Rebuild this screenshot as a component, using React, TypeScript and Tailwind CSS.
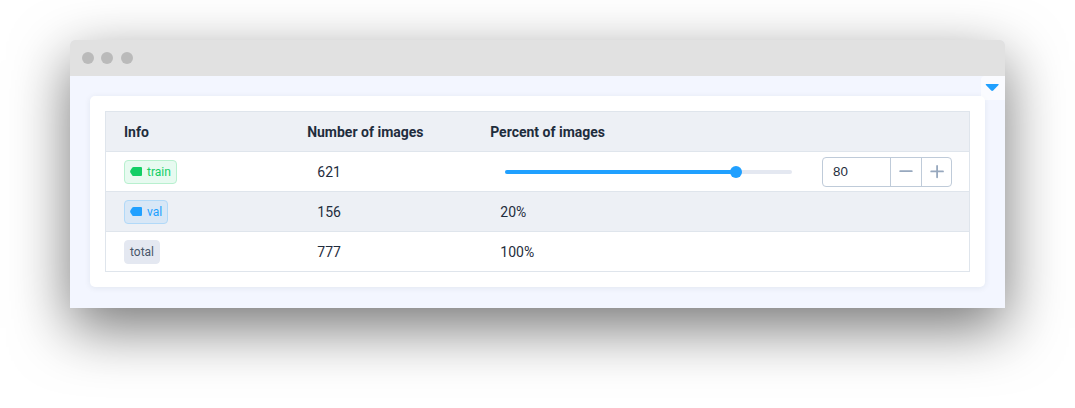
import type { ReactNode } from "react";

const COLS = "grid grid-cols-[183px_183px_1fr] items-center pl-[18px]";

function LabelIcon() {
  return (
    <svg width="12" height="9" viewBox="0 0 12 9" className="mr-[5px] shrink-0" fill="currentColor">
      <path d="M3.6 0H11Q12 0 12 1V8Q12 9 11 9H3.6Q2.8 9 2.3 8.4L.4 5.4Q-.1 4.5.4 3.6L2.3.6Q2.8 0 3.6 0Z" />
    </svg>
  );
}

function Tag({ tone, children }: { tone: string; children: ReactNode }) {
  return (
    <span className={`inline-flex h-6 items-center rounded-[4px] border px-[5px] text-[12px] leading-none ${tone}`}>
      {children}
    </span>
  );
}

function Row({ tag, count, shaded, children }: { tag: ReactNode; count: number; shaded?: boolean; children: ReactNode }) {
  return (
    <div className={`${COLS} h-10 border-b border-[#dfe5ec] ${shaded ? "bg-[#edf0f5]" : "bg-white"}`}>
      <div className="flex">{tag}</div>
      <div className="pl-[10.3px]">{count}</div>
      <div className="pl-[10.3px]">{children}</div>
    </div>
  );
}

function Slider() {
  return (
    <div className="ml-[4.7px] flex h-3 w-[287px] items-center">
      <div className="flex h-1 w-full items-center rounded-full bg-[#e4e8f1]">
        <div className="h-1 w-[231px] rounded-full bg-[#20a0ff]" />
        <div className="-ml-[6px] size-3 rounded-full bg-[#20a0ff]" />
      </div>
    </div>
  );
}

function NumberInput() {
  return (
    <div className="ml-[30px] flex h-[30px] w-[130px] rounded-[4px] border border-[#bfcbd9] bg-white text-[#97a8be]">
      <div className="flex w-[67px] items-center pl-[10px] font-['Liberation_Sans',sans-serif] text-[13.33px] text-[#1f2d3d]">80</div>
      <div className="flex w-[31px] items-center justify-center border-l border-[#bfcbd9]">
        <svg width="14" height="14" viewBox="0 0 14 14" fill="none" stroke="currentColor" strokeWidth="1.8" strokeLinecap="round"><path d="M1.2 6.2H12.8" /></svg>
      </div>
      <div className="flex flex-1 items-center justify-center border-l border-[#bfcbd9] pl-px">
        <svg width="14" height="14" viewBox="0 0 14 14" fill="none" stroke="currentColor" strokeWidth="1.8" strokeLinecap="round"><path d="M1.2 6.4H13M7.1 .9V12.3" /></svg>
      </div>
    </div>
  );
}

export default function App() {
  return (
    <div className="h-[408px] w-[1075px] overflow-hidden bg-white px-[70px] pt-10 font-[Roboto,sans-serif] text-[14px] leading-5 text-[#1f2d3d]">
      <div className="relative h-[268px] w-[935px] rounded-t-[5px] bg-[#f3f6ff] shadow-[0_20px_58px_rgba(0,0,0,0.54)]">
        <div className="flex h-9 items-center rounded-t-[5px] bg-[#e1e1e1] pl-3">
          <span className="size-3 rounded-full bg-[#bababa]" />
          <span className="ml-[7px] size-3 rounded-full bg-[#bababa]" />
          <span className="ml-[8px] size-3 rounded-full bg-[#bababa]" />
        </div>
        <div className="px-5 pt-5">
          <div className="h-[191px] rounded-[5px] bg-white p-[15px] shadow-[0_1px_6px_rgba(31,45,61,0.08)]">
            <div className="border-x border-t border-[#dfe5ec]">
              <div className={`${COLS} h-10 border-b border-[#dfe5ec] bg-[#edf0f5] font-bold`}>
                <div>Info</div>
                <div className="pl-[0.15px]">Number of images</div>
                <div className="pl-[0.15px]">Percent of images</div>
              </div>
              <Row count={621} tag={<Tag tone="border-[#b8f0cf] bg-[#e7faf0] text-[#13ce66]"><LabelIcon />train</Tag>}>
                <div className="flex items-center">
                  <Slider />
                  <NumberInput />
                </div>
              </Row>
              <Row count={156} shaded tag={<Tag tone="border-[#b1d9f8] bg-[#d8e7f6] text-[#20a0ff]"><LabelIcon />val</Tag>}>20%</Row>
              <Row count={777} tag={<Tag tone="border-[#e4e8f1] bg-[#e4e8f1] text-[#48576a]">total</Tag>}>100%</Row>
            </div>
          </div>
        </div>
        <div className="absolute right-0 top-9 flex h-6 w-6 justify-center rounded-l-[4px] bg-white/60 pr-[2px] pt-[8px]">
          <svg width="14" height="7" viewBox="0 0 14 7" fill="#20a0ff"><path d="M1.2 0H13.2Q14 .2 13.5.9L8.2 6.5Q7.2 7.3 6.2 6.5L.9.9Q.4 .2 1.2 0Z" /></svg>
        </div>
      </div>
    </div>
  );
}
